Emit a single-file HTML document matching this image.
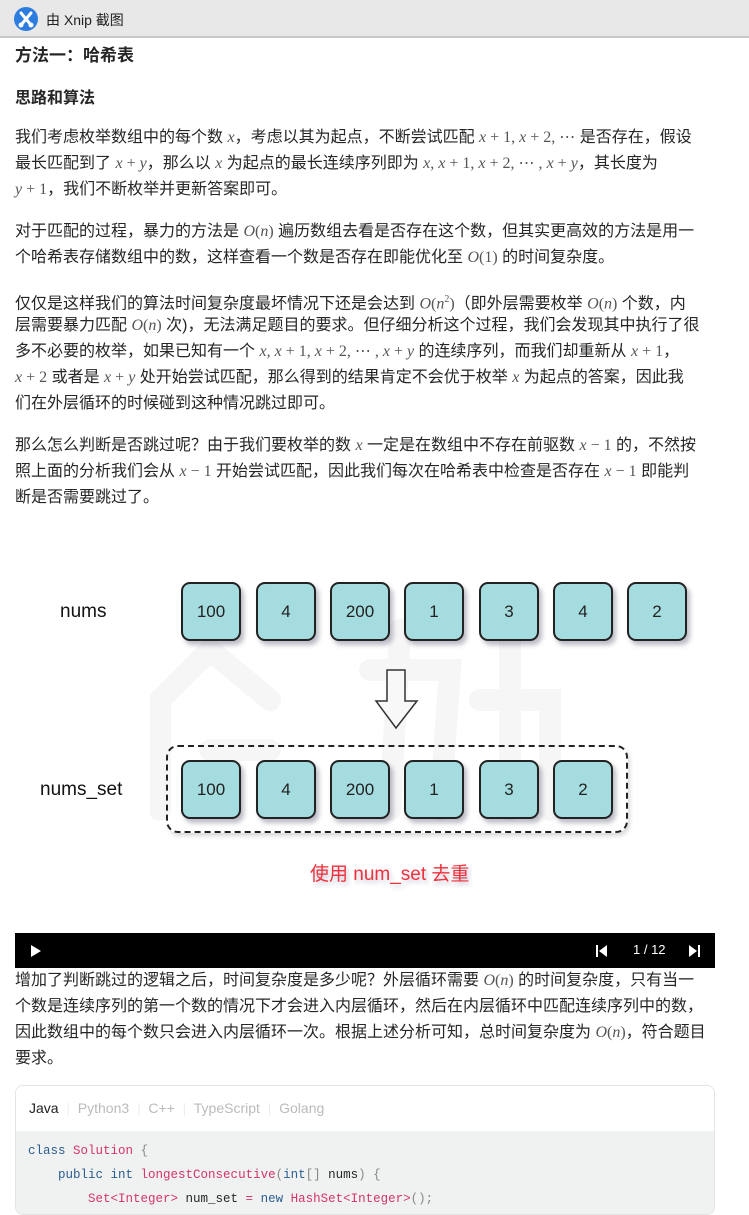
<!DOCTYPE html>
<html><head><meta charset="utf-8"><style>
*{margin:0;padding:0;box-sizing:border-box}
body{width:749px;height:1201px;background:#fff;position:relative;overflow:hidden;font-family:"Liberation Sans","Noto Sans CJK SC",sans-serif;color:#262626}
.l{position:absolute;left:15px;font-size:16px;line-height:20px;white-space:nowrap}
.m{font-family:"Liberation Serif",serif;font-style:italic;color:#555;font-size:16px}
.r{font-family:"Liberation Serif",serif;color:#555}
.bar{position:absolute;left:0;top:0;width:749px;height:38px;background:#e8e8e8;border-bottom:2px solid #c8c8c8}
.box{position:absolute;width:60px;height:59px;background:#a5dcdf;border:2px solid #222;border-radius:9px;box-shadow:3px 4px 5px rgba(60,60,90,.35);font-size:17px;text-align:center;line-height:55px;color:#222}
.lab{position:absolute;font-size:19px;color:#111}
.code{font-family:"Liberation Mono",monospace;font-size:12.5px;position:absolute;left:28px;white-space:pre}
</style></head><body>
<div class="bar">
<svg style="position:absolute;left:14px;top:7px" width="24" height="24" viewBox="0 0 24 24"><circle cx="12" cy="12" r="12" fill="#2d7ce0"/><path d="M7 6 L12 12 L17 6 M12 12 L7 18 M12 12 L17 18" stroke="#fff" stroke-width="3" stroke-linecap="round" fill="none"/><circle cx="7" cy="18" r="2.5" fill="#fff"/><circle cx="17" cy="18" r="2.5" fill="#fff"/></svg>
<div style="position:absolute;left:46px;top:10px;font-size:14px;color:#222">由 Xnip 截图</div>
</div>
<div class="l" style="top:46px;font-weight:bold;font-size:17px">方法一：哈希表</div>
<div class="l" style="top:89px;font-weight:bold">思路和算法</div>

<div class="l" style="top:128px">我们考虑枚举数组中的每个数 <span class="m">x</span>，考虑以其为起点，不断尝试匹配 <span class="m">x</span><span class="r"> + 1, </span><span class="m">x</span><span class="r"> + 2, ⋯</span> 是否存在，假设</div>
<div class="l" style="top:154px">最长匹配到了 <span class="m">x</span><span class="r"> + </span><span class="m">y</span>，那么以 <span class="m">x</span> 为起点的最长连续序列即为 <span class="m">x</span><span class="r">, </span><span class="m">x</span><span class="r"> + 1, </span><span class="m">x</span><span class="r"> + 2, ⋯ , </span><span class="m">x</span><span class="r"> + </span><span class="m">y</span>，其长度为</div>
<div class="l" style="top:180px"><span class="m">y</span><span class="r"> + 1</span>，我们不断枚举并更新答案即可。</div>

<div class="l" style="top:222px">对于匹配的过程，暴力的方法是 <span class="m">O</span><span class="r">(</span><span class="m">n</span><span class="r">)</span> 遍历数组去看是否存在这个数，但其实更高效的方法是用一</div>
<div class="l" style="top:248px">个哈希表存储数组中的数，这样查看一个数是否存在即能优化至 <span class="m">O</span><span class="r">(1)</span> 的时间复杂度。</div>

<div class="l" style="top:290px">仅仅是这样我们的算法时间复杂度最坏情况下还是会达到 <span class="m">O</span><span class="r">(</span><span class="m">n</span><sup class="r" style="font-size:10px">2</sup><span class="r">)</span>（即外层需要枚举 <span class="m">O</span><span class="r">(</span><span class="m">n</span><span class="r">)</span> 个数，内</div>
<div class="l" style="top:316px">层需要暴力匹配 <span class="m">O</span><span class="r">(</span><span class="m">n</span><span class="r">)</span> 次)，无法满足题目的要求。但仔细分析这个过程，我们会发现其中执行了很</div>
<div class="l" style="top:342px">多不必要的枚举，如果已知有一个 <span class="m">x</span><span class="r">, </span><span class="m">x</span><span class="r"> + 1, </span><span class="m">x</span><span class="r"> + 2, ⋯ , </span><span class="m">x</span><span class="r"> + </span><span class="m">y</span> 的连续序列，而我们却重新从 <span class="m">x</span><span class="r"> + 1</span>，</div>
<div class="l" style="top:368px"><span class="m">x</span><span class="r"> + 2</span> 或者是 <span class="m">x</span><span class="r"> + </span><span class="m">y</span> 处开始尝试匹配，那么得到的结果肯定不会优于枚举 <span class="m">x</span> 为起点的答案，因此我</div>
<div class="l" style="top:394px">们在外层循环的时候碰到这种情况跳过即可。</div>

<div class="l" style="top:436px">那么怎么判断是否跳过呢？由于我们要枚举的数 <span class="m">x</span> 一定是在数组中不存在前驱数 <span class="m">x</span><span class="r"> − 1</span> 的，不然按</div>
<div class="l" style="top:462px">照上面的分析我们会从 <span class="m">x</span><span class="r"> − 1</span> 开始尝试匹配，因此我们每次在哈希表中检查是否存在 <span class="m">x</span><span class="r"> − 1</span> 即能判</div>
<div class="l" style="top:488px">断是否需要跳过了。</div>

<!-- diagram -->
<svg style="position:absolute;left:150px;top:610px" width="480" height="240" viewBox="0 0 480 240" fill="none" stroke="#f6f6f6" stroke-width="22" stroke-linecap="round"><path d="M10 200 L10 90 L60 40 L120 90 M60 140 L120 140"/><path d="M220 60 L300 60 L290 200 M250 20 L240 200"/><path d="M360 30 L360 200 M330 90 L400 90 L400 200"/></svg>
<div class="lab" style="left:60px;top:601px">nums</div>
<div class="lab" style="left:40px;top:779px">nums_set</div>
<div class="box" style="left:181px;top:582px">100</div>
<div class="box" style="left:256px;top:582px">4</div>
<div class="box" style="left:330px;top:582px">200</div>
<div class="box" style="left:404px;top:582px">1</div>
<div class="box" style="left:479px;top:582px">3</div>
<div class="box" style="left:553px;top:582px">4</div>
<div class="box" style="left:627px;top:582px">2</div>
<svg style="position:absolute;left:374px;top:668px" width="46" height="66"><path d="M13 2 H31 V33 H43 L22 60 L2 33 H13 Z" fill="#f8f8f8" stroke="#333" stroke-width="1.5"/></svg>
<div style="position:absolute;left:166px;top:745px;width:462px;height:88px;border:2px dashed #222;border-radius:12px;box-shadow:2px 3px 4px rgba(0,0,0,.15)"></div>
<div class="box" style="left:181px;top:760px">100</div>
<div class="box" style="left:256px;top:760px">4</div>
<div class="box" style="left:330px;top:760px">200</div>
<div class="box" style="left:404px;top:760px">1</div>
<div class="box" style="left:479px;top:760px">3</div>
<div class="box" style="left:553px;top:760px">2</div>
<div style="position:absolute;left:310px;top:859px;font-size:19px;color:#f0303a;text-shadow:2px 3px 4px rgba(60,60,120,.3)">使用 num_set 去重</div>

<div style="position:absolute;left:15px;top:933px;width:700px;height:35px;background:#000"></div>
<svg style="position:absolute;left:30px;top:944px" width="12" height="14"><path d="M1 1 L11 7 L1 13Z" fill="#fff"/></svg>
<svg style="position:absolute;left:596px;top:945px" width="12" height="12"><rect x="0" y="0" width="2" height="12" fill="#fff"/><path d="M11 0 L3 6 L11 12Z" fill="#fff"/></svg>
<div style="position:absolute;left:633px;top:942px;color:#fff;font-size:13px">1 / 12</div>
<svg style="position:absolute;left:689px;top:945px" width="12" height="12"><path d="M0 0 L8 6 L0 12Z" fill="#fff"/><rect x="9" y="0" width="2" height="12" fill="#fff"/></svg>

<div class="l" style="top:971px">增加了判断跳过的逻辑之后，时间复杂度是多少呢？外层循环需要 <span class="m">O</span><span class="r">(</span><span class="m">n</span><span class="r">)</span> 的时间复杂度，只有当一</div>
<div class="l" style="top:997px">个数是连续序列的第一个数的情况下才会进入内层循环，然后在内层循环中匹配连续序列中的数，</div>
<div class="l" style="top:1023px">因此数组中的每个数只会进入内层循环一次。根据上述分析可知，总时间复杂度为 <span class="m">O</span><span class="r">(</span><span class="m">n</span><span class="r">)</span>，符合题目</div>
<div class="l" style="top:1049px">要求。</div>

<div style="position:absolute;left:15px;top:1085px;width:700px;height:130px;border:1px solid #e4e4e4;border-radius:8px;overflow:hidden">
<div style="height:45px;background:#fff;font-size:14px;line-height:45px;padding-left:13px;color:#bbb;white-space:nowrap"><span style="color:#222">Java</span> &nbsp;<span style="color:#eee">|</span>&nbsp; Python3 &nbsp;<span style="color:#eee">|</span>&nbsp; C++ &nbsp;<span style="color:#eee">|</span>&nbsp; TypeScript &nbsp;<span style="color:#eee">|</span>&nbsp; Golang</div>
<div style="height:90px;background:#f0f2f2"></div>
</div>
<div class="code" style="top:1144px"><span style="color:#2c5d8f">class</span> <span style="color:#d6336c">Solution</span> <span style="color:#888">{</span></div>
<div class="code" style="top:1168px">    <span style="color:#2c5d8f">public int</span> <span style="color:#d6336c">longestConsecutive</span><span style="color:#888">(</span><span style="color:#2c5d8f">int</span><span style="color:#888">[]</span> nums<span style="color:#888">) {</span></div>
<div class="code" style="top:1192px">        <span style="color:#d6336c">Set&lt;Integer&gt;</span> num_set <span style="color:#d6336c">=</span> <span style="color:#2c5d8f">new</span> <span style="color:#d6336c">HashSet&lt;Integer&gt;</span><span style="color:#888">();</span></div>
</body></html>
